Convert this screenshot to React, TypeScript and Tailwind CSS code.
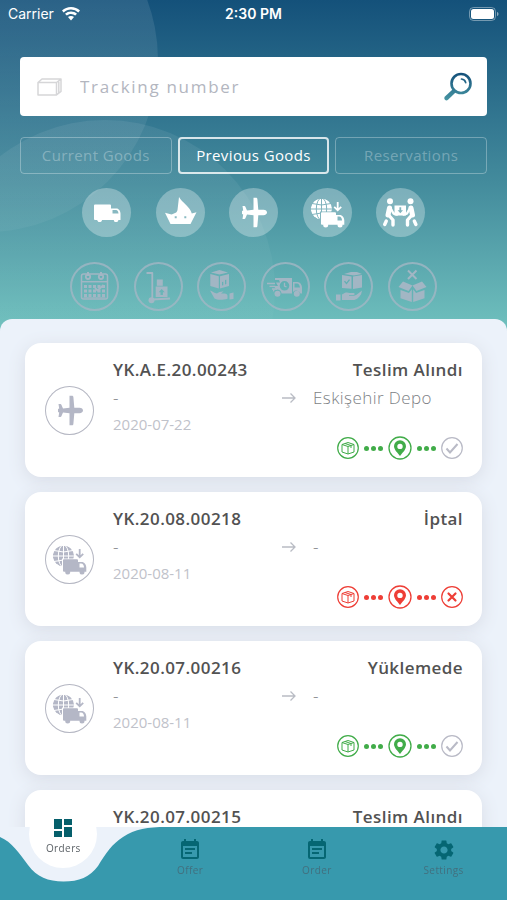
import { useId, useState } from 'react';
import type { ComponentType } from 'react';
import { MdDashboard, MdEventNote, MdSettings } from 'react-icons/md';

type Status = 'done' | 'cancelled';

interface Shipment {
  id: number;
  code: string;
  status: string;
  from: string;
  to: string;
  date: string;
  kind: 'plane' | 'globe';
  state: Status;
}

const shipments: Shipment[] = [
  { id: 1, code: 'YK.A.E.20.00243', status: 'Teslim Alındı', from: '-', to: 'Eskişehir Depo', date: '2020-07-22', kind: 'plane', state: 'done' },
  { id: 2, code: 'YK.20.08.00218', status: 'İptal', from: '-', to: '-', date: '2020-08-11', kind: 'globe', state: 'cancelled' },
  { id: 3, code: 'YK.20.07.00216', status: 'Yüklemede', from: '-', to: '-', date: '2020-08-11', kind: 'globe', state: 'done' },
  { id: 4, code: 'YK.20.07.00215', status: 'Teslim Alındı', from: '-', to: '-', date: '2020-08-11', kind: 'globe', state: 'done' },
];

// All round icons share a 49x49 box, the size of the circle around them

function TruckIcon() {
  return (
    <svg viewBox="0 0 49 49" fill="currentColor" className="size-full">
      <path fillRule="evenodd" d="M13 16.500h15a1 1 0 0 1 1 1v3h5.500c2.200 0 4 2.500 4 5V32h-2a2.400 2.400 0 0 1-4.700 0H20a2.400 2.400 0 0 1-4.700 0H13a1 1 0 0 1-1-1V17.500a1 1 0 0 1 1-1ZM30.500 22v3.500h6c-.2-2-1-3.500-2.500-3.500Z" />
      <circle cx="17.600" cy="32" r="2.100" />
      <circle cx="33.900" cy="32" r="2.100" />
    </svg>
  );
}

function BoatIcon() {
  return (
    <svg viewBox="0 0 49 49" fill="currentColor" className="size-full">
      <path fillRule="evenodd" d="M23 9c3 5.500 11 9.500 12.800 16.500l4.700-1.200-6 11.700h-20L9 24.700l6.500 1.800c4-1.500 5.500-2 6-4.500ZM18.700 28.300v2h2v-2Zm9.600 0v2h2v-2Z" />
    </svg>
  );
}

function PlaneIcon() {
  return (
    <svg viewBox="0 0 49 49" fill="currentColor" className="size-full">
      <path d="M24.500 9.700h2.500c.9 0 1.300.5 1.400 1.500l.9 10.600h5.200c2.200 0 3.500 1.300 3.500 2.700s-1.300 2.700-3.500 2.700h-5.200l-.9 10.600c-.1 1-.5 1.500-1.400 1.500h-2.500V27.200l-6.500-.7-1.500 3.500c-.3.800-.8 1-1.500 1h-1.500l.7-4.500-1.200-.5v-3l1.200-.5-.7-4.500H15c.7 0 1.200.200 1.500 1l1.500 3.500 6.500-.7Z" />
    </svg>
  );
}

function GlobeTruckIcon() {
  const maskId = useId();
  return (
    <svg viewBox="0 0 49 49" fill="currentColor" className="size-full">
      <mask id={maskId}>
        <circle cx="18.500" cy="21" r="10.600" fill="#fff" />
        <g fill="none" stroke="#000" strokeWidth="1">
          <ellipse cx="18.500" cy="21" rx="5.200" ry="11" />
          <path d="M18.500 10v22M7 21h23M9 15.500q9.500 3 19 0M9 26.500q9.500-3 19 0" />
        </g>
        <path d="M17 23.500h26v20H17Z" fill="#000" />
        <path d="M30.500 10h10v14h-10Z" fill="#000" />
      </mask>
      <circle cx="18.500" cy="21" r="10.600" mask={`url(#${maskId})`} />
      <path fillRule="evenodd" d="M19 24.300h13a1 1 0 0 1 1 1V27h3.500c3 0 4.800 2.500 4.800 5.500v4.300H19a1 1 0 0 1-1-1V25.300a1 1 0 0 1 1-1ZM34.500 28.500v4H39c0-2.300-1-4-3-4Z" />
      <circle cx="22.700" cy="37" r="2.500" />
      <circle cx="37" cy="37" r="2.500" />
      <path d="M34.700 14v8m-3.500-3.200 3.500 3.500 3.500-3.500" fill="none" stroke="currentColor" strokeWidth="1.800" />
    </svg>
  );
}

function CarryIcon() {
  return (
    <svg viewBox="0 0 49 49" fill="currentColor" className="size-full">
      <circle cx="14" cy="13.300" r="3" />
      <circle cx="34.500" cy="13.300" r="3" />
      <path fillRule="evenodd" d="M18.500 17.500H30v10H18.500Zm4.900 1.800v3h-1.800l2.700 3 2.700-3h-1.800v-3Z" />
      <g fill="none" stroke="currentColor" strokeLinecap="round" strokeLinejoin="round">
        <path d="m13.500 20-1.500 7" strokeWidth="5" />
        <path d="m35 20 1.500 7" strokeWidth="5" />
        <path d="m13.500 28 3.500 4v5M10.300 33 8.700 36.500" strokeWidth="3.400" />
        <path d="m35 28-3.500 4v5M38.300 33l1.600 3.500" strokeWidth="3.400" />
        <path d="m14.500 20 3 5.500 3.500 1M34 20l-3 5.500-3.500 1" strokeWidth="2.400" />
      </g>
    </svg>
  );
}

function CalendarIcon() {
  return (
    <svg viewBox="0 0 49 49" fill="none" stroke="currentColor" className="size-full">
      <rect x="11.500" y="12" width="26" height="25" rx="2" strokeWidth="1.500" />
      <path d="M11.500 19.700h26" strokeWidth="1.500" />
      <circle cx="18" cy="14.800" r="2.200" strokeWidth="1.800" />
      <circle cx="31" cy="14.800" r="2.200" strokeWidth="1.800" />
      <path d="M18 10v4M31 10v4" strokeWidth="2" />
      <path d="M14 24.500h21M14 29h21M14 33.500h21" strokeWidth="3" strokeDasharray="3 1.500" />
      <path d="m25 26 2.500 2.500 6-5.500" strokeWidth="1.800" />
      <path d="M13.500 35.800h22" strokeWidth="1" />
    </svg>
  );
}

function HandTruckIcon() {
  return (
    <svg viewBox="0 0 49 49" fill="currentColor" className="size-full">
      <path d="M12.500 11h5.800v26.500L36 36.500" fill="none" stroke="currentColor" strokeWidth="1.800" strokeLinejoin="round" />
      <circle cx="17.500" cy="38.300" r="3" />
      <path d="M22.800 17.500h6v6.300h-6Z" />
      <path fillRule="evenodd" d="M21.700 24.500h11.800V35H21.700Zm6 2.500-3 3.200h1.800V33h2.400v-2.800h1.800Z" />
    </svg>
  );
}

function PickupIcon() {
  return (
    <svg viewBox="0 0 49 49" fill="currentColor" className="size-full">
      <path d="m14 10.500 8.500-2.500 8.500 2.500-8.500 2Z" />
      <path d="m13.300 12 8.500 2.200v12.300l-8.500-2.500Z" />
      <path fillRule="evenodd" d="m23 14.200 9-2.200v12l-9 2.500Zm2 5.800v3.500l1.300-.3v-3.500Zm3-2v4.500l1.300-.4v-4.400Z" />
      <path d="M13 28.500c3 .5 4 3 7 3 1.500-1.500 4-2.200 6.500-2l-2.500 2h3.500c2 0 3 1.200 3 2.500v2.800c-4 1-10 1.700-13-.3Z" />
      <path d="m32.500 31.500 4-1v6.500l-4 .5Z" />
    </svg>
  );
}

function FastTruckIcon() {
  return (
    <svg viewBox="0 0 49 49" fill="currentColor" className="size-full">
      <path fillRule="evenodd" d="M14 16h17v15.500H20.500a4.500 4.500 0 0 0-8.500-1.500v-2.500h3L13 24h4l-2-3.500h4l-1-2.500h-4Zm9.500 3a4.800 4.800 0 1 0 0 9.600 4.800 4.800 0 0 0 0-9.600Z" />
      <path fillRule="evenodd" d="M32 20h4.500c2.500 0 4.500 3 4.500 5.500V31.500h-1.500a4.500 4.500 0 0 0-7.500-1.500Zm1.500 1.500v4H39c-.5-2.500-1.500-4-3-4Z" />
      <circle cx="16.500" cy="31.700" r="3" />
      <circle cx="35.800" cy="31.700" r="3" />
      <path d="M6 21.500h8M8.500 24.300h6M11 27h5M23.500 20.800v3.200l2 1" fill="none" stroke="currentColor" strokeWidth="1.300" />
    </svg>
  );
}

function DeliveredIcon() {
  return (
    <svg viewBox="0 0 49 49" fill="currentColor" className="size-full">
      <path d="m20 12 7-2h6l5 2-8 1.500Z" />
      <path fillRule="evenodd" d="m18 13 9.500 1.500v12.300L18 26Zm2 6.500 2.500 3 3.500-4.500-1-.8-2.500 3.200-1.500-1.700Z" />
      <path d="m29 14.500 9-1.500v12.500l-9 1.500Z" />
      <path d="m38 28.500-1 4c-2.500 3-4 5.500-8 5.500H18v-5.500c3-2.500 5.500-2.500 7.500-1.500h4c1.500 0 1.500 2 0 2h-4.500v.8h5c3-.8 5.500-3.500 8-5.300Z" />
      <path d="M12 32.500h4.500v6H12Z" />
    </svg>
  );
}

function RejectedIcon() {
  return (
    <svg viewBox="0 0 49 49" fill="currentColor" className="size-full">
      <path d="m20 8.500 8.500 8.500M28.500 8.500 20 17" fill="none" stroke="currentColor" strokeWidth="2" />
      <path d="m15 19.500 9.500 4-4 5.500-10-4Z" />
      <path d="m34 19.500-9.500 4 4 5.500 10-4Z" />
      <path d="m12.500 28 8.500 3 2.800-3.800V40l-11.300-3.800Z" />
      <path d="m36.500 28-8.500 3-2.800-3.800V40l11.300-3.800Z" />
    </svg>
  );
}

interface IconItem {
  label: string;
  icon: ComponentType;
}

const transports: IconItem[] = [
  { label: 'Road', icon: TruckIcon },
  { label: 'Sea', icon: BoatIcon },
  { label: 'Air', icon: PlaneIcon },
  { label: 'Partial', icon: GlobeTruckIcon },
  { label: 'Moving', icon: CarryIcon },
];

const steps: IconItem[] = [
  { label: 'Planned', icon: CalendarIcon },
  { label: 'Loading', icon: HandTruckIcon },
  { label: 'Picked up', icon: PickupIcon },
  { label: 'On the way', icon: FastTruckIcon },
  { label: 'Delivered', icon: DeliveredIcon },
  { label: 'Rejected', icon: RejectedIcon },
];

const tabs = ['Current Goods', 'Previous Goods', 'Reservations'];

function StatusBar() {
  return (
    <div className="grid h-7 grid-cols-3 items-center px-2 font-[Inter,sans-serif] text-sm text-white">
      <div className="flex items-center gap-2">
        <span>Carrier</span>
        <svg viewBox="0 0 18 14" className="h-[14px] w-[18px]" fill="currentColor">
          <path d="M9 0c3.500 0 6.700 1.400 9 3.600l-1.700 1.800A10.500 10.500 0 0 0 9 2.500c-2.800 0-5.400 1.100-7.300 2.900L0 3.600A13 13 0 0 1 9 0Z" />
          <path d="M9 4.500c2.300 0 4.400.9 6 2.300l-1.800 1.800A6.200 6.200 0 0 0 9 7c-1.600 0-3.100.6-4.200 1.600L3 6.800a9 9 0 0 1 6-2.300Z" />
          <path d="M9 9c1.200 0 2.200.4 3 1.100L9 13.400l-3-3.300A4.500 4.500 0 0 1 9 9Z" />
        </svg>
      </div>
      <span className="text-center font-semibold">2:30 PM</span>
      <svg viewBox="0 0 30 14" className="h-[14px] w-[30px] justify-self-end" fill="none">
        <rect x=".5" y=".5" width="26" height="13" rx="4" stroke="#fff" strokeOpacity=".4" />
        <rect x="2" y="2" width="23" height="10" rx="2.500" fill="#fff" />
        <path d="M28 5v4c1-.3 1.500-1.200 1.500-2S29 5.300 28 5Z" fill="#fff" fillOpacity=".5" />
      </svg>
    </div>
  );
}

function SearchBox() {
  return (
    <form onSubmit={(e) => e.preventDefault()} className="mx-5 mt-[29px] flex h-[59px] items-center rounded bg-white pl-[17px] pr-[14px]">
      <svg viewBox="0 0 26 18" className="h-[18px] w-[26px] shrink-0" fill="none" stroke="#d6d6d8" strokeWidth="1.500" strokeLinejoin="round">
        <path d="M1 4.500h18.500V17H1ZM1 4.500 5 1h19l-4.500 3.500M24 1v12.500L19.500 17M21.800 3.500V15" />
      </svg>
      <input
        type="text"
        aria-label="Tracking number"
        placeholder="Tracking number"
        className="min-w-0 flex-1 px-[17px] text-[17px] tracking-widest text-gray-700 outline-none placeholder:text-[#b3b6bf]"
      />
      <button type="submit" aria-label="Search" className="size-[30px] shrink-0">
        <svg viewBox="0 0 30 30" className="size-full" fill="none" strokeLinecap="round">
          <defs>
            <linearGradient id="lens" x1="0" y1="0" x2="0" y2="30" gradientUnits="userSpaceOnUse">
              <stop stopColor="#124d78" />
              <stop offset="1" stopColor="#4a9ba6" />
            </linearGradient>
          </defs>
          <circle cx="18" cy="11.500" r="9.500" stroke="url(#lens)" strokeWidth="2.600" />
          <path d="m10.500 19.500-7 6.700" stroke="url(#lens)" strokeWidth="4.400" />
          <path d="M18.500 7c2 .2 3.800 1.700 4.200 3.700" stroke="url(#lens)" strokeWidth="1.700" />
        </svg>
      </button>
    </form>
  );
}

function Dots() {
  return (
    <span className="flex gap-[2px]">
      <span className="size-[5px] rounded-full bg-current" />
      <span className="size-[5px] rounded-full bg-current" />
      <span className="size-[5px] rounded-full bg-current" />
    </span>
  );
}

function Progress({ state }: { state: Status }) {
  const cancelled = state === 'cancelled';
  return (
    <div className={`flex h-6 items-center justify-end gap-[5px] ${cancelled ? 'text-[#ee3e36]' : 'text-[#41ac49]'}`}>
      <svg viewBox="0 0 22 22" className="size-[22px]" fill="none" stroke="currentColor" strokeLinejoin="round">
        <circle cx="11" cy="11" r="10.300" strokeWidth="1.200" />
        <path d="m5 7.500 6-2 6 2v7.500l-6 2-6-2ZM5 7.500l6 2 6-2M11 9.500V17M8 6.500l6 2v2.500" strokeWidth="1" />
      </svg>
      <Dots />
      <svg viewBox="0 0 24 24" className="size-6" fill="none">
        <circle cx="12" cy="12" r="11" stroke="currentColor" strokeWidth="1.300" />
        <path fill="currentColor" fillRule="evenodd" d="M12 4.300a6 6 0 0 1 6 6c0 3.500-4 7-6 9.700-2-2.700-6-6.200-6-9.700a6 6 0 0 1 6-6Zm0 3.400a2.700 2.700 0 1 0 0 5.400 2.700 2.700 0 0 0 0-5.400Z" />
      </svg>
      <Dots />
      {cancelled ? (
        <svg viewBox="0 0 22 22" className="size-[22px]" fill="none" stroke="currentColor">
          <circle cx="11" cy="11" r="10.300" strokeWidth="1.200" />
          <path d="m7.500 7.500 7 7m0-7-7 7" strokeWidth="2.200" strokeLinecap="round" />
        </svg>
      ) : (
        <svg viewBox="0 0 22 22" className="size-[22px] text-[#b9bac6]" fill="none" stroke="currentColor">
          <circle cx="11" cy="11" r="10.300" strokeWidth="1.200" />
          <path d="m5.500 11.500 3.500 4L16.500 7" strokeWidth="2" />
        </svg>
      )}
    </div>
  );
}

function ShipmentCard({ item }: { item: Shipment }) {
  return (
    <li className="flex items-center gap-[19px] rounded-[16px] bg-white pt-[13px] pr-[19px] pb-[17px] pl-5 shadow-[0_4px_18px_#d8dce6]">
      <div className="mt-1 size-[49px] shrink-0 rounded-full text-[#b4b7c6] ring-1 ring-[#b4b6c2] ring-inset">
        {item.kind === 'plane' ? <PlaneIcon /> : <GlobeTruckIcon />}
      </div>
      <div className="min-w-0 flex-1">
        <div className="flex justify-between text-[17px] leading-7 font-semibold tracking-wide text-[#525252]">
          <h2>{item.code}</h2>
          <span>{item.status}</span>
        </div>
        <div className="flex items-center text-[17px] leading-7 font-light tracking-wide text-[#7d7f85]">
          <span className="flex-1">{item.from}</span>
          <svg viewBox="0 0 14 12" className="h-3 w-[14px]" fill="none" stroke="#b9bcc4" strokeWidth="1.300">
            <path d="M0 6h13M8.500 1.500 13 6l-4.500 4.500" />
          </svg>
          <span className="ml-[17px] w-[150px]">{item.to}</span>
        </div>
        <time dateTime={item.date} className="block text-[15px] leading-6 text-[#bfc2ca]">
          {item.date}
        </time>
        <Progress state={item.state} />
      </div>
    </li>
  );
}

function BottomNav() {
  return (
    <nav className="relative h-[73px] shrink-0 bg-[#3799ad] tracking-wide">
      <svg viewBox="0 0 166 56" className="absolute top-0 left-0 h-14 w-[166px]" fill="#ecf2fa">
        <path d="M0 10C12 15 19 26 28 38c9 12 20 16.500 35.500 16.500S90 50 98 39c8-13 14-22 25-29C135 2 148 0 166 0H0Z" />
      </svg>
      <div className="relative grid h-full grid-cols-4 justify-items-center text-[10px] leading-4 text-[#42707f]">
        <a href="#orders" aria-current="page" className="-mt-[27px] flex size-[68px] flex-col items-center rounded-full bg-white pt-4 text-[#5b6166]">
          <MdDashboard className="size-6 text-[#055f6b]" />
          Orders
        </a>
        <a href="#offer" className="flex flex-col items-center pt-[11px]">
          <MdEventNote className="size-6 text-[#056673]" />
          Offer
        </a>
        <a href="#order" className="flex flex-col items-center pt-[11px]">
          <MdEventNote className="size-6 text-[#056673]" />
          Order
        </a>
        <a href="#settings" className="flex flex-col items-center pt-[11px]">
          <MdSettings className="size-6 text-[#056673]" />
          Settings
        </a>
      </div>
    </nav>
  );
}

export default function App() {
  const [activeTab, setActiveTab] = useState('Previous Goods');

  return (
    <div className="flex h-screen flex-col overflow-hidden bg-[#ecf2fa] font-['Open_Sans',sans-serif]">
      <header className="relative shrink-0 overflow-hidden bg-linear-to-b from-[#14517a] via-[#438b9c] via-55% to-[#70c1be] pb-5">
        <svg className="absolute inset-0 size-full">
          <defs>
            <linearGradient id="glow" x1="0" y1="0" x2="0" y2="330" gradientUnits="userSpaceOnUse">
              <stop stopColor="#fff" stopOpacity=".1" />
              <stop offset="1" stopColor="#fff" stopOpacity=".02" />
            </linearGradient>
          </defs>
          <circle cx="-14" cy="60" r="172" fill="url(#glow)" />
          <circle cx="105" cy="290" r="170" fill="url(#glow)" />
        </svg>
        <div className="relative">
          <StatusBar />
          <SearchBox />

          <div className="mx-5 mt-[21px] grid grid-cols-3 gap-[6px]">
            {tabs.map((tab) => (
              <button
                key={tab}
                type="button"
                onClick={() => setActiveTab(tab)}
                className={`h-[37px] rounded border text-[15px] tracking-wide ${
                  tab === activeTab ? 'border-2 border-white/80 font-medium text-white' : 'border-white/30 text-white/30'
                }`}
              >
                {tab}
              </button>
            ))}
          </div>

          <div className="mt-[14px] flex justify-between px-[82px]">
            {transports.map(({ label, icon: Icon }) => (
              <button key={label} type="button" aria-label={label} className="size-[49px] rounded-full bg-white/30 text-white">
                <Icon />
              </button>
            ))}
          </div>

          <div className="mt-[25px] flex justify-between px-[70px]">
            {steps.map(({ label, icon: Icon }) => (
              <button key={label} type="button" aria-label={label} className="size-[49px] rounded-full text-[#a2b6c4] ring-2 ring-[#a2b6c4]/80 ring-inset">
                <Icon />
              </button>
            ))}
          </div>
        </div>
      </header>

      <main className="relative -mt-3 min-h-0 flex-1 overflow-y-auto rounded-t-xl bg-[#ecf2fa] px-[25px] pt-6 [scrollbar-width:none]">
        <ul className="space-y-[15px]">
          {shipments.map((item) => (
            <ShipmentCard key={item.id} item={item} />
          ))}
        </ul>
      </main>

      <BottomNav />
    </div>
  );
}
